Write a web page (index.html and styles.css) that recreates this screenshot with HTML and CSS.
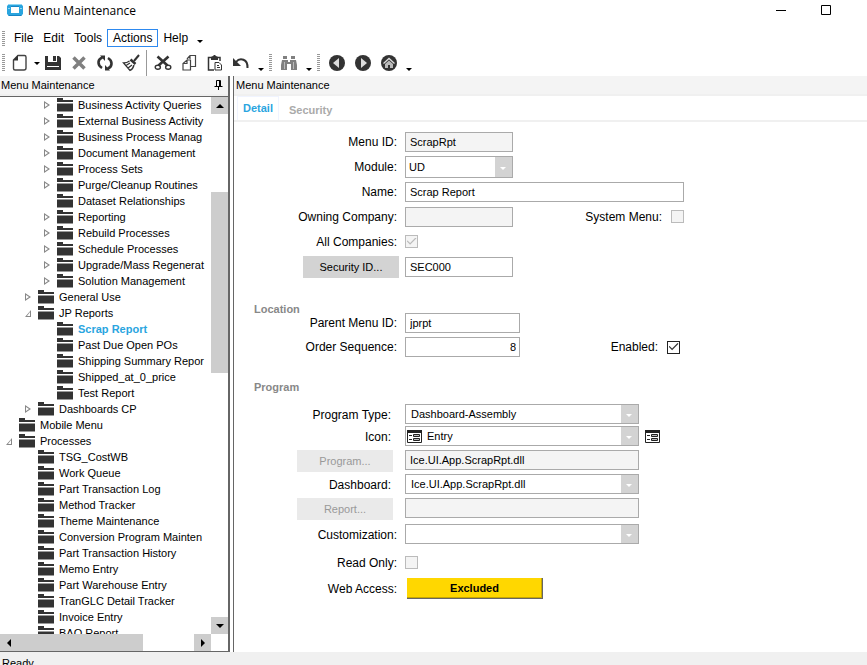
FILE: index.html
```html
<!DOCTYPE html>
<html lang="en">
<head>
    <meta charset="UTF-8">
    <meta name="viewport" content="width=device-width, initial-scale=1.0">
    <title>Menu Maintenance</title>
    <link rel="stylesheet" href="styles.css">
</head>
<body>
    <!-- Title bar -->
    <header class="titlebar">
        <svg class="logo" width="16" height="14" viewBox="0 0 16 14">
            <path fill="#2aa5df" fill-rule="evenodd" d="M2 1h12l2 2v8l-2 2H2l-2-2V3zM4 4v6h8V4z"/>
            <path fill="#8fd6f3" d="M2 1h12l1 1H1zM1 5h2v1H1zM13 5h2v1h-2z"/>
            <path fill="#1684c4" d="M1 12h14l-1 1H2zM4 3h8v1H4z"/>
        </svg>
        <span>Menu Maintenance</span>
        <div class="window-buttons">
            <button aria-label="Minimize"><svg width="10" height="10"><path d="M0 5.500h10" stroke="#000"/></svg></button>
            <button aria-label="Maximize"><svg width="10" height="10"><path d="M.5.500h9v9h-9z" fill="none" stroke="#000"/></svg></button>
        </div>
    </header>

    <!-- Menu -->
    <nav class="menubar">
        <span class="grip"></span>
        <button>File</button>
        <button>Edit</button>
        <button>Tools</button>
        <button class="active">Actions</button>
        <button>Help</button>
        <span class="overflow"></span>
    </nav>

    <!-- Toolbar -->
    <div class="toolbar">
        <span class="grip"></span>
        <button aria-label="New"><svg width="18" height="18" viewBox="0 0 18 18"><path d="M7 1.500h6.500q1.500 0 1.500 1.500v11q0 2-2 2H4q-1.500 0-1.500-1.500V6z" fill="none" stroke="#444" stroke-width="1.400"/><path fill="#333" d="M7 1v5.500H2z"/></svg></button>
        <span class="drop"></span>
        <button aria-label="Save"><svg width="18" height="18" viewBox="0 0 18 18"><path fill="#333" fill-rule="evenodd" d="M1 2h3v6h9V2h2l2 2v12H1zM3 12v1h12v-1zM9 2h3v5H9z"/></svg></button>
        <button aria-label="Delete"><svg width="18" height="18" viewBox="0 0 18 18"><path d="M3.500 3.500l11 11M14.500 3.500l-11 11" stroke="#808080" stroke-width="3.500"/></svg></button>
        <button aria-label="Refresh"><svg width="18" height="18" viewBox="0 0 18 18"><path d="M6 14C1 11 1.500 5 6.500 3.500M12 4C17 7 16.500 13 11.500 14.500" fill="none" stroke="#333" stroke-width="2.600"/><path fill="#333" d="M4 1.500h5v5.500zM14 16.500H9V11z"/></svg></button>
        <button aria-label="Clear"><svg width="18" height="18" viewBox="0 0 18 18"><path d="M17 1l-5 6" stroke="#333" stroke-width="2"/><path d="M8.500 5.500l5 4.500" stroke="#333" stroke-width="2.500"/><path d="M7.500 7Q5 9 1.500 9L8 16.500Q11 15 12 11M4 11.500l4-2.500M6 14l4-3" fill="none" stroke="#333" stroke-width="1.300"/></svg></button>
        <span class="separator"></span>
        <button aria-label="Cut"><svg width="18" height="18" viewBox="0 0 18 18"><path d="M3.500 2.500l10 9M14.500 2.500l-10 9" stroke="#333" stroke-width="2.600"/><ellipse cx="3.800" cy="13.200" rx="2.600" ry="2" fill="none" stroke="#333" stroke-width="1.400"/><ellipse cx="14.200" cy="13.200" rx="2.600" ry="2" fill="none" stroke="#333" stroke-width="1.400"/></svg></button>
        <button aria-label="Copy"><svg width="18" height="18" viewBox="0 0 18 18"><path d="M7 5l3-3.500h5.500v11H11M10.500 6H7L3 9.500V16h7.500zM7 6v3.500H3M10 1.500V5" fill="none" stroke="#444" stroke-width="1.200"/></svg></button>
        <button aria-label="Paste"><svg width="18" height="18" viewBox="0 0 18 18"><path d="M8 16H2.500V3.500H14V7" fill="none" stroke="#333" stroke-width="1.500"/><path fill="#333" d="M5 3l2-1 1-1h1l1 1 2 1v3H5z"/><path d="M9 8.500h4l2.500 2.500v5H9zM11 11.500h2M11 13.500h3" fill="#fff" stroke="#333"/></svg></button>
        <button aria-label="Undo"><svg width="18" height="18" viewBox="0 0 18 18"><path d="M4 8C8 3 16 5 15.500 14" fill="none" stroke="#333" stroke-width="2"/><path fill="#333" d="M1 4v8h8z"/></svg></button>
        <span class="overflow"></span>
        <span class="grip"></span>
        <button aria-label="Search"><svg width="18" height="18" viewBox="0 0 18 18"><path fill="#808080" d="M3 2h4v3H3zM11 2h4v3h-4zM2 6h6v2h2V6h6l1 5v5h-6v-6H7v6H1v-5z"/><path d="M4.500 8v7M13.500 8v7" stroke="#bbb"/></svg></button>
        <span class="overflow"></span>
        <span class="grip"></span>
        <button aria-label="Back"><svg width="18" height="18" viewBox="0 0 18 18"><circle cx="9" cy="9" r="8" fill="#333"/><path fill="#ddd" d="M11 4v10L5 9z"/></svg></button>
        <button aria-label="Forward"><svg width="18" height="18" viewBox="0 0 18 18"><circle cx="9" cy="9" r="8" fill="#333"/><path fill="#ddd" d="M7 4v10l6-5z"/></svg></button>
        <button aria-label="Home"><svg width="18" height="18" viewBox="0 0 18 18"><circle cx="9" cy="9" r="8" fill="#333"/><path d="M3.500 9.500L9 4.500l5.500 5" fill="none" stroke="#ddd" stroke-width="1.300"/><path fill="#bbb" d="M5 10l4-3.500 4 3.500v4h-3v-3H8v3H5z"/></svg></button>
        <span class="overflow"></span>
    </div>

    <div class="workspace">
        <!-- Tree panel -->
        <aside class="sidebar">
            <div class="panel-header">
                <span>Menu Maintenance</span>
                <svg class="pin" width="9" height="10"><path d="M2.500 6V.5h4V6M.5 6.500h8M4.500 7v3M5.500 1v5" fill="none" stroke="#000"/></svg>
            </div>
            <div class="tree-box">
                <div class="tree">
                    <ul>
                        <li>
                            <ul>
                                <li>
                                    <ul>
                                        <li><div class="node closed">Business Activity Queries</div></li>
                                        <li><div class="node closed">External Business Activity</div></li>
                                        <li><div class="node closed">Business Process Manag</div></li>
                                        <li><div class="node closed">Document Management</div></li>
                                        <li><div class="node closed">Process Sets</div></li>
                                        <li><div class="node closed">Purge/Cleanup Routines</div></li>
                                        <li><div class="node">Dataset Relationships</div></li>
                                        <li><div class="node closed">Reporting</div></li>
                                        <li><div class="node closed">Rebuild Processes</div></li>
                                        <li><div class="node closed">Schedule Processes</div></li>
                                        <li><div class="node closed">Upgrade/Mass Regenerat</div></li>
                                        <li><div class="node closed">Solution Management</div></li>
                                    </ul>
                                </li>
                                <li><div class="node closed">General Use</div></li>
                                <li>
                                    <div class="node open">JP Reports</div>
                                    <ul>
                                        <li><div class="node selected">Scrap Report</div></li>
                                        <li><div class="node">Past Due Open POs</div></li>
                                        <li><div class="node">Shipping Summary Repor</div></li>
                                        <li><div class="node">Shipped_at_0_price</div></li>
                                        <li><div class="node">Test Report</div></li>
                                    </ul>
                                </li>
                                <li><div class="node closed">Dashboards CP</div></li>
                            </ul>
                        </li>
                        <li><div class="node">Mobile Menu</div></li>
                        <li>
                            <div class="node open">Processes</div>
                            <ul>
                                <li><div class="node">TSG_CostWB</div></li>
                                <li><div class="node">Work Queue</div></li>
                                <li><div class="node">Part Transaction Log</div></li>
                                <li><div class="node">Method Tracker</div></li>
                                <li><div class="node">Theme Maintenance</div></li>
                                <li><div class="node">Conversion Program Mainten</div></li>
                                <li><div class="node">Part Transaction History</div></li>
                                <li><div class="node">Memo Entry</div></li>
                                <li><div class="node">Part Warehouse Entry</div></li>
                                <li><div class="node">TranGLC Detail Tracker</div></li>
                                <li><div class="node">Invoice Entry</div></li>
                                <li><div class="node">BAQ Report</div></li>
                            </ul>
                        </li>
                    </ul>
                </div>
                <div class="scroll-v">
                    <button aria-label="Scroll up"><svg width="8" height="4"><path d="M4 0l4 4H0z"/></svg></button>
                    <div class="track"><div class="thumb"></div></div>
                    <button aria-label="Scroll down"><svg width="8" height="4"><path d="M0 0h8L4 4z"/></svg></button>
                </div>
                <div class="scroll-h">
                    <button aria-label="Scroll left"><svg width="4" height="8"><path d="M4 0v8L0 4z"/></svg></button>
                    <div class="track"><div class="thumb"></div></div>
                    <button aria-label="Scroll right"><svg width="4" height="8"><path d="M0 0l4 4-4 4z"/></svg></button>
                </div>
            </div>
        </aside>

        <!-- Detail form -->
        <main class="content">
            <div class="panel-header">Menu Maintenance</div>
            <div class="tabs">
                <button class="tab current">Detail</button>
                <button class="tab">Security</button>
            </div>

            <form>
                <section class="general">
                    <label for="menu-id">Menu ID:</label>
                    <div class="field"><input type="text" id="menu-id" class="small" value="ScrapRpt" readonly></div>

                    <label for="module">Module:</label>
                    <div class="field">
                        <span class="select small tall"><select id="module"><option>UD</option></select></span>
                    </div>

                    <label for="name">Name:</label>
                    <div class="field"><input type="text" id="name" class="wide" value="Scrap Report"></div>

                    <label for="company">Owning Company:</label>
                    <div class="field">
                        <input type="text" id="company" class="small" readonly>
                        <div class="aside">
                            <label for="system-menu">System Menu:</label>
                            <input type="checkbox" id="system-menu" disabled>
                        </div>
                    </div>

                    <label for="all-companies">All Companies:</label>
                    <div class="field"><input type="checkbox" id="all-companies" checked disabled></div>

                    <button type="button">Security ID...</button>
                    <div class="field"><input type="text" class="small" value="SEC000" aria-label="Security ID"></div>
                </section>

                <h2>Location</h2>
                <section class="location">
                    <label for="parent">Parent Menu ID:</label>
                    <div class="field"><input type="text" id="parent" value="jprpt"></div>

                    <label for="order">Order Sequence:</label>
                    <div class="field">
                        <input type="text" id="order" class="number" value="8">
                        <div class="aside">
                            <label for="enabled">Enabled:</label>
                            <input type="checkbox" id="enabled" checked>
                        </div>
                    </div>
                </section>

                <h2>Program</h2>
                <section class="program">
                    <label for="type" class="indent">Program Type:</label>
                    <div class="field">
                        <span class="select"><select id="type"><option>Dashboard-Assembly</option></select></span>
                    </div>

                    <label for="icon" class="indent">Icon:</label>
                    <div class="field">
                        <span class="select with-icon">
                            <svg class="form-icon" width="15" height="13"><path d="M.5.500h14v12H.5z" fill="#fff" stroke="#222"/><path fill="#222" d="M0 0h15v3H0z"/><path d="M2 5.500h3M2 9.500h3M6.500 4.500h6v2h-6zM6.500 8.500h6v2h-6z" fill="#bbb" stroke="#222"/></svg>
                            <select id="icon"><option>Entry</option></select>
                        </span>
                        <svg width="15" height="13"><path d="M.5.500h14v12H.5z" fill="#fff" stroke="#222"/><path fill="#222" d="M0 0h15v3H0z"/><path d="M2 5.500h3M2 9.500h3M6.500 4.500h6v2h-6zM6.500 8.500h6v2h-6z" fill="#bbb" stroke="#222"/></svg>
                    </div>

                    <button type="button" class="indent" disabled>Program...</button>
                    <div class="field"><input type="text" value="Ice.UI.App.ScrapRpt.dll" aria-label="Program" readonly></div>

                    <label for="dashboard" class="indent">Dashboard:</label>
                    <div class="field">
                        <span class="select"><select id="dashboard"><option>Ice.UI.App.ScrapRpt.dll</option></select></span>
                    </div>

                    <button type="button" class="indent" disabled>Report...</button>
                    <div class="field"><input type="text" aria-label="Report" readonly></div>

                    <label for="customization">Customization:</label>
                    <div class="field">
                        <span class="select"><select id="customization"><option></option></select></span>
                    </div>

                    <label for="read-only">Read Only:</label>
                    <div class="field"><input type="checkbox" id="read-only" disabled></div>

                    <label for="web-access">Web Access:</label>
                    <div class="field"><button type="button" id="web-access" class="access">Excluded</button></div>
                </section>
            </form>
        </main>
    </div>

    <footer class="statusbar">Ready</footer>
</body>
</html>
```

FILE: styles.css
```css
* {
    box-sizing: border-box;
}

body {
    display: flex;
    flex-direction: column;
    height: 100vh;
    margin: 0;
    overflow: hidden;
    background-color: #fff;
    color: #000;
    font-family: "Liberation Sans", Arial, sans-serif;
    font-size: 11px;
}

button, input, select {
    margin: 0;
    color: inherit;
    font-family: inherit;
    font-size: 11px;
}

button {
    display: flex;
    align-items: center;
    justify-content: center;
    padding: 0;
    border: none;
    background: none;
}

/* Title bar */
.titlebar {
    display: flex;
    align-items: center;
    flex: none;
    height: 20px;
    padding: 0 19px 0 7px;
    gap: 5px;
    font-family: "Open Sans", "Noto Sans", sans-serif;
    font-size: 12px;
}

.window-buttons {
    display: flex;
    margin-left: auto;
}

.window-buttons button {
    width: 45px;
    height: 20px;
}

/* Menu bar and toolbar */
.menubar, .toolbar {
    display: flex;
    align-items: center;
    flex: none;
}

.menubar {
    height: 20px;
    margin-top: 8px;
}

.menubar button {
    height: 18px;
    padding: 0 4px;
    border: 1px solid transparent;
    font-size: 12px;
}

.menubar button.active {
    padding: 0 5px;
    border-color: #2d89ef;
}

.toolbar {
    height: 26px;
    margin-top: 2px;
}

.toolbar button {
    width: 26px;
    height: 26px;
}

.grip {
    width: 3px;
    height: 18px;
    margin: 0 5px 0 2px;
    background: repeating-linear-gradient(#999 0 1px, #fff 1px 2px);
}

.menubar .grip {
    height: 15px;
    margin-right: 4px;
}

.toolbar .grip:first-child {
    margin-right: 2px;
}

.separator {
    width: 1px;
    height: 26px;
    margin: 0 3px 0 2px;
    background-color: #999;
}

.drop, .overflow {
    display: flex;
    justify-content: center;
    width: 7px;
}

.overflow {
    align-self: flex-end;
    width: 14px;
    padding-bottom: 5px;
}

.drop::after, .overflow::after {
    content: "";
    border: 3px solid transparent;
    border-top-color: #000;
    border-bottom: none;
}

.toolbar .overflow + .grip {
    margin: 0 4px 0 1px;
}

/* Panels */
.workspace {
    display: flex;
    flex: 1;
    min-height: 0;
}

.sidebar {
    display: flex;
    flex-direction: column;
    flex: none;
    width: 230px;
    margin-right: 3px;
    border-right: 2px solid #666;
}

.content {
    flex: 1;
    min-width: 0;
    border-left: 1px solid #666;
}

.panel-header {
    display: flex;
    align-items: center;
    justify-content: space-between;
    flex: none;
    height: 20px;
    padding: 0 5px 0 1px;
    border-bottom: 2px solid #f0f0f0;
    background-color: #f4f4f4;
}

.content .panel-header {
    padding-left: 2px;
}

/* Tree */
.tree-box {
    display: grid;
    grid-template-columns: 1fr 17px;
    grid-template-rows: 1fr 17px;
    flex: 1;
    min-height: 0;
    border-top: 1px solid #666;
    border-bottom: 1px solid #666;
}

.tree {
    min-height: 0;
    overflow: hidden;
    white-space: nowrap;
}

.tree ul {
    margin: 0;
    padding: 0;
    list-style: none;
}

.tree ul ul {
    padding-left: 19px;
}

.node {
    display: flex;
    align-items: center;
    height: 16px;
}

/* expand arrow */
.node::before {
    content: "";
    order: -2;
    flex: none;
    width: 6px;
    height: 8px;
    margin: 0 7px 0 6px;
}

.node.closed::before {
    clip-path: polygon(0 0, 100% 50%, 0 100%, 0 0, 1px 2px, 1px 6px, 4px 4px, 1px 2px);
    background-color: #888;
}

.node.open::before {
    clip-path: polygon(100% 1px, 100% 100%, 0 100%, 100% 1px, 5px 3px, 2px 7px, 5px 7px, 5px 3px);
    background-color: #888;
}

/* folder icon */
.node::after {
    content: "";
    order: -1;
    flex: none;
    width: 16px;
    height: 14px;
    margin-right: 5px;
    background:
        linear-gradient(#333, #333) 0 0 / 6px 2px no-repeat,
        linear-gradient(#333, #333) 0 2px / 16px 2px no-repeat,
        linear-gradient(#999, #999) 0 5px / 16px 1px no-repeat,
        linear-gradient(#333, #333) 0 6px / 16px 7px no-repeat,
        linear-gradient(#999, #999) 0 13px / 16px 1px no-repeat;
}

.node.selected {
    color: #2aa5df;
    font-weight: bold;
}

/* Scrollbars */
.scroll-v, .scroll-h {
    display: flex;
}

.scroll-v {
    flex-direction: column;
}

.scroll-v button, .scroll-h button {
    flex: none;
    width: 17px;
    height: 17px;
    background-color: #cdcdcd;
}

.track {
    flex: 1;
}

.thumb {
    background-color: #cdcdcd;
}

.scroll-v .thumb {
    height: 36%;
    margin-top: 78px;
}

.scroll-h .thumb {
    width: 71%;
    height: 17px;
}

/* Tabs */
.tabs {
    display: flex;
    align-items: flex-end;
    height: 26px;
    padding-left: 3px;
    border-bottom: 2px solid #f0f0f0;
}

.tab {
    height: 20px;
    padding: 0 10px;
    color: #aaa;
    font-weight: bold;
}

.tab.current {
    height: 24px;
    padding: 0 5px 2px;
    border: 1px solid #f0f4ff;
    border-bottom: none;
    color: #2aa5df;
}

/* Form */
form {
    padding-top: 7px;
}

form section {
    display: grid;
    grid-template-columns: 165px 1fr;
    column-gap: 6px;
    align-items: center;
}

form h2 {
    margin: 0 0 0 20px;
    color: #888;
    font-size: 11px;
    line-height: 16px;
}

label {
    font-size: 12px;
    line-height: 22px;
}

section > label {
    padding-right: 2px;
    text-align: right;
}

section > button {
    justify-self: end;
    width: 96px;
    height: 22px;
    background-color: #d3d3d3;
}

section > button:disabled {
    background-color: #eaeaea;
    color: #999;
}

section > .indent {
    margin-right: 6px;
}

.general {
    grid-auto-rows: 25px;
    margin-bottom: 22px;
}

.location {
    grid-auto-rows: 24px;
    margin: -6px 0 20px;
}

.program {
    grid-template-rows: 22px 24px 24px 24px 26px 28px 26px 24px;
    align-items: start;
    margin-top: 9px;
}

.field {
    display: flex;
    align-items: center;
    gap: 6px;
    width: 279px;
}

.location .field {
    width: 275px;
}

.program .field {
    min-height: 20px;
}

.aside {
    display: flex;
    align-items: center;
    gap: 9px;
    margin-left: auto;
}

input[type="text"] {
    width: 234px;
    height: 20px;
    padding: 0 4px;
    border: 1px solid #aaa;
    border-radius: 0;
    background-color: #fff;
    outline: none;
}

input[type="text"].small, .select.small {
    width: 108px;
}

input[type="text"].wide {
    width: 279px;
}

.location input[type="text"] {
    width: 115px;
}

input[type="text"].number {
    padding-right: 3px;
    text-align: right;
}

input[type="text"]:read-only {
    background-color: #f4f4f4;
}

input[type="checkbox"] {
    display: flex;
    align-items: center;
    justify-content: center;
    appearance: none;
    width: 13px;
    height: 13px;
    margin: 0;
    border: 1px solid #222;
    background-color: #fff;
    color: #333;
}

input[type="checkbox"]:disabled {
    border-color: #bbb;
    background-color: #f4f4f4;
    color: #bbb;
}

input[type="checkbox"]:checked::after {
    content: "";
    width: 10px;
    height: 8px;
    clip-path: polygon(0 45%, 10% 36%, 36% 68%, 90% 0, 100% 10%, 36% 92%);
    background-color: currentColor;
}

.select {
    display: flex;
    position: relative;
    width: 234px;
    height: 20px;
    border: 1px solid #aaa;
}

.select.tall {
    height: 22px;
}

.select select {
    flex: 1;
    min-width: 0;
    padding: 0 20px 0 5px;
    border: none;
    border-radius: 0;
    appearance: none;
    background-color: transparent;
    outline: none;
}

.select.small select {
    padding-left: 3px;
}

.select::before {
    content: "";
    position: absolute;
    top: 0;
    right: 0;
    bottom: 0;
    width: 17px;
    background-color: #d3d3d3;
}

.select::after {
    content: "";
    position: absolute;
    top: 50%;
    right: 6px;
    border: 3px solid transparent;
    border-top-color: #fff;
    border-bottom: none;
}

.form-icon {
    align-self: center;
    margin-left: 1px;
}

.access {
    width: 136px;
    height: 21px;
    margin-left: 2px;
    border: solid #666;
    border-width: 0 1px 1px 0;
    box-shadow: inset -1px -1px #c8a800;
    background-color: #ffd700;
    font-weight: bold;
}

/* Status bar */
.statusbar {
    flex: none;
    height: 13px;
    padding: 5px 2px 0;
    overflow: hidden;
    background-color: #f0f0f0;
    line-height: 12px;
}
```
